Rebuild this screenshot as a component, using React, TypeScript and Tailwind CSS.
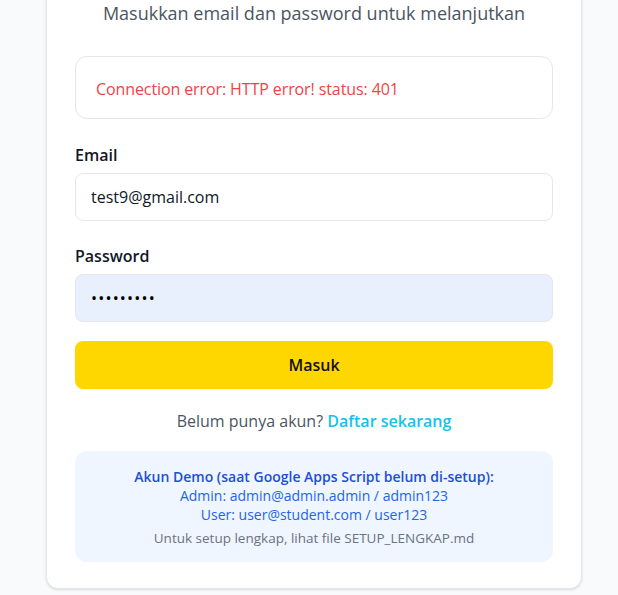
import React from "react";

export default function App() {
  return (
    <div className="min-h-[595px] w-full bg-[#f9fafb] font-['Segoe_UI','Open_Sans',sans-serif] overflow-hidden">
      <div className="ml-[46px] mt-[-31px] w-[536px] rounded-xl border border-gray-200 bg-white px-7 pt-[29px] pb-[26px] shadow-sm">
        <p className="text-center text-[18px] leading-7 text-[#4b5563]">
          Masukkan email dan password untuk melanjutkan
        </p>

        <div className="mt-[29px] rounded-xl border border-gray-200 bg-white px-5 pt-[20px] pb-[17px]">
          <p className="text-[16px] leading-6 text-[#ef4444] tracking-[-0.1px]">
            Connection error: HTTP error! status: 401
          </p>
        </div>

        <div className="mt-6 flex flex-col">
          <label className="text-[16px] font-semibold leading-6 text-[#111827]">Email</label>
          <input
            readOnly
            value="test9@gmail.com"
            className="mt-[6px] h-12 w-full rounded-lg border border-gray-200 bg-white px-[15px] text-[16px] text-[#111827] outline-none"
          />
        </div>

        <div className="mt-[23px] flex flex-col">
          <label className="text-[16px] font-semibold leading-6 text-[#111827]">Password</label>
          <div className="mt-[6px] flex h-12 w-full items-center rounded-lg border border-gray-200 bg-[#e8f0fe] px-[15px] text-[16px] tracking-[1.2px] text-black">
            •••••••••
          </div>
        </div>

        <button className="mt-[19px] flex h-12 w-full items-center justify-center rounded-lg bg-[#ffd700] text-[16px] font-semibold text-[#111]">
          Masuk
        </button>

        <p className="mt-5 text-center text-[16px] leading-6 text-[#4b5563]">
          Belum punya akun?{" "}
          <span className="font-semibold text-[#12c2f2]">Daftar sekarang</span>
        </p>

        <div className="mt-[18px] rounded-xl bg-[#eff6ff] px-4 pt-4 pb-[15px] text-center">
          <p className="text-[14px] font-semibold leading-[19px] text-[#1d4ed8]">
            Akun Demo (saat Google Apps Script belum di-setup):
          </p>
          <p className="text-[14px] leading-[19px] text-[#2563eb]">
            Admin: admin@admin.admin / admin123
          </p>
          <p className="text-[14px] leading-[19px] text-[#2563eb]">
            User: user@student.com / user123
          </p>
          <p className="mt-[5px] text-[13.5px] leading-[18px] text-[#6b7280]">
            Untuk setup lengkap, lihat file SETUP_LENGKAP.md
          </p>
        </div>
      </div>
    </div>
  );
}
